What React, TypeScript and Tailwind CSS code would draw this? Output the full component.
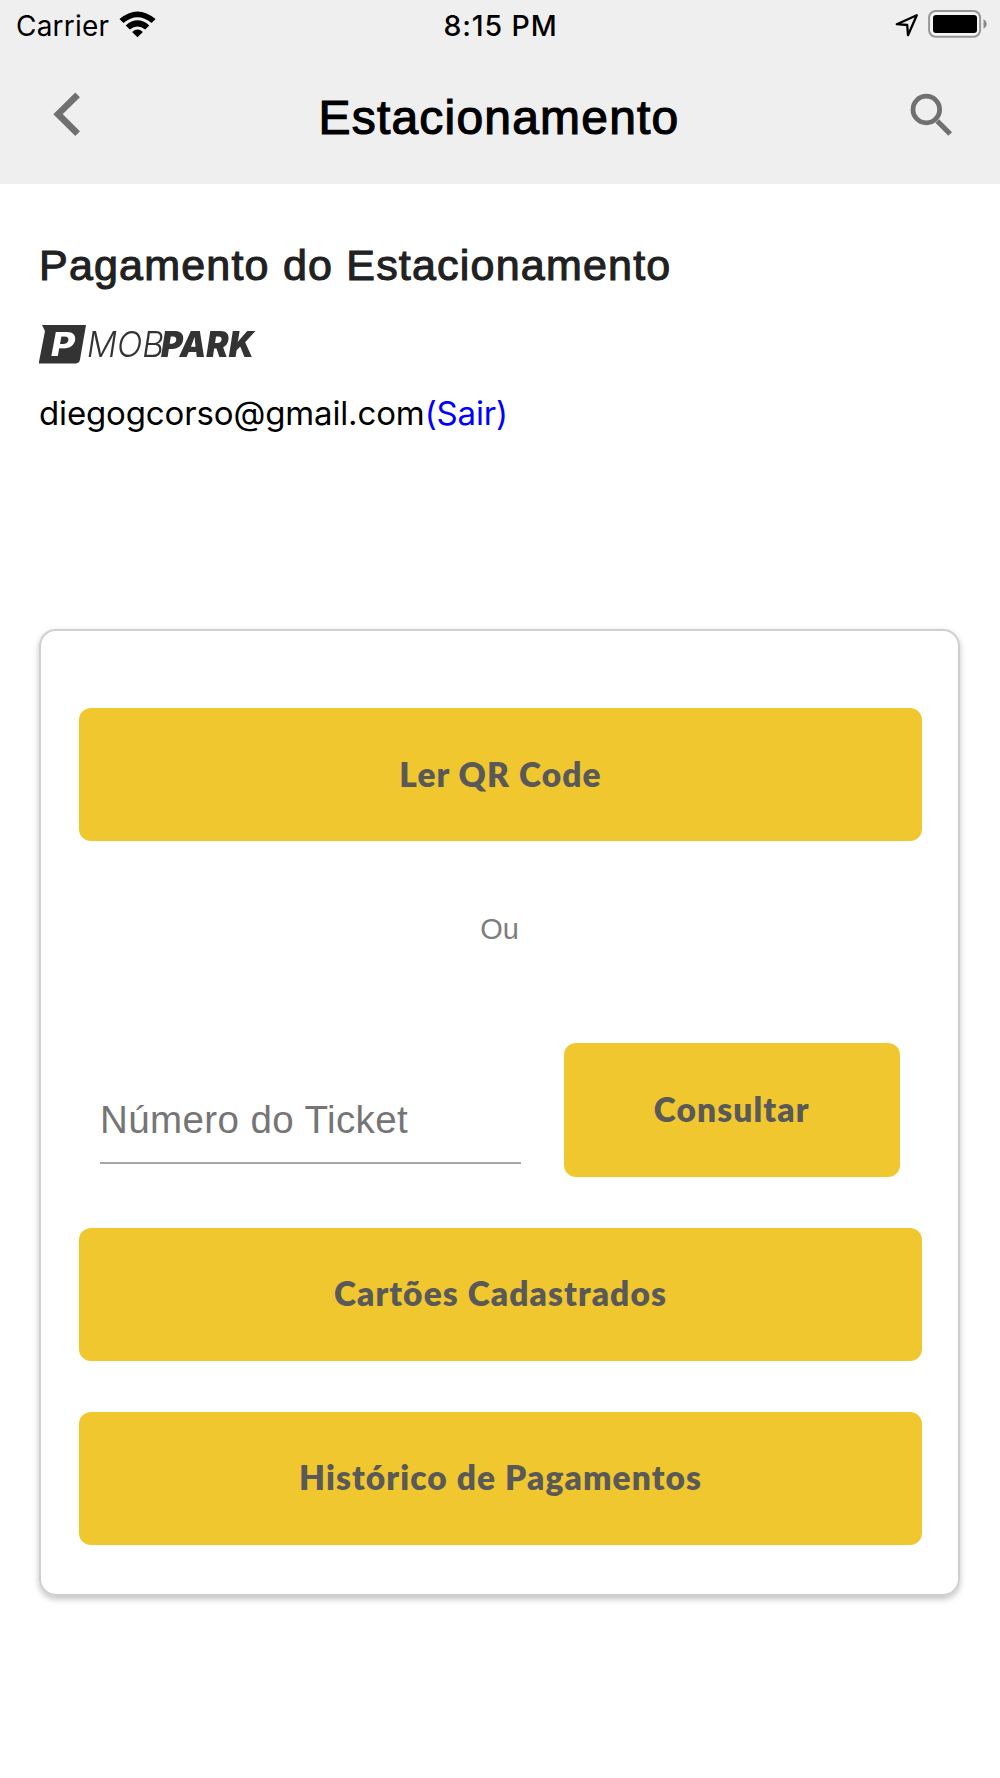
import type { ReactNode } from "react";

function StatusBar() {
  return (
    <div className="flex h-[50px] items-center justify-between pr-[13px] pl-4 font-['Inter',sans-serif] text-black">
      <div className="flex flex-1 items-center gap-[10px]">
        <span className="pt-[2px] text-[28px] leading-[48px] tracking-[0.2px]">Carrier</span>
        <svg width="37" height="27" viewBox="0 0 38 28" className="mb-[2px]">
          <path d="M0.3 8.4Q19 -7.4 37.7 8.4L33.6 12.4Q19 0.6 4.4 12.4Z" />
          <path d="M6.8 15Q19 4.4 31.2 15L27 19.1Q19 12.8 11 19.1Z" />
          <path d="M13.4 21.7Q19 16.8 24.6 21.7L19 27.2Z" />
        </svg>
      </div>
      <span className="pt-[2px] pr-[2px] text-[28.5px] leading-[48px] font-medium tracking-[0.9px]">8:15 PM</span>
      <div className="flex flex-1 items-center justify-end gap-[9px]">
        <svg width="24" height="24" viewBox="0 0 24 24" fill="none" stroke="#000" strokeWidth="2.3" strokeLinejoin="round">
          <path d="M21.8 2.2L1.8 11.2L12.2 12L13 22.2Z" />
        </svg>
        <svg width="59" height="28" viewBox="0 0 59 28" className="mb-[2px]">
          <rect x="1.1" y="1.1" width="51" height="25.6" rx="6.5" fill="#f4f4f4" stroke="#969696" strokeWidth="2" />
          <rect x="5" y="5" width="44" height="18" rx="3" />
          <path d="M55.5 9.2Q58.7 11 58.7 14T55.5 18.8Z" fill="#888" />
        </svg>
      </div>
    </div>
  );
}

function NavBar() {
  return (
    <div className="flex h-[134px] items-center justify-between pr-[47px] pb-[6px] pl-[53px]">
      <button className="w-[45px]" aria-label="Voltar">
        <svg width="28" height="44" viewBox="0 0 28 44" fill="none" stroke="#707070" strokeWidth="6.6">
          <path d="M24.6 2.8L5 22.2L24.6 41.6" />
        </svg>
      </button>
      <h1 className="pt-[8px] text-[48px] leading-none tracking-[1.2px] text-black [-webkit-text-stroke:1.2px_#000]">
        Estacionamento
      </h1>
      <button className="flex w-[53px] justify-end" aria-label="Buscar">
        <svg width="45" height="44" viewBox="0 0 45 44" fill="none" stroke="#707070">
          <circle cx="18.3" cy="17.5" r="13.3" strokeWidth="4.8" />
          <path d="M29.2 29L42.2 42" strokeWidth="5.2" />
        </svg>
      </button>
    </div>
  );
}

function Logo() {
  return (
    <svg width="230" height="56" viewBox="0 -8 230 56" fill="#333" className="blur-[0.5px]">
      <path d="M3 0H47L41 34.5Q40.3 38.6 36 38.6H0V36.8L6 6Z" />
      <g className="font-['Inter',sans-serif] italic">
        <text x="12" y="31" textLength="24" lengthAdjust="spacingAndGlyphs" fill="#fff" className="text-[32px] font-extrabold">P</text>
        <text x="48" y="32" textLength="77" lengthAdjust="spacingAndGlyphs" className="text-[35px] font-light">MOB</text>
        <text x="122" y="32" textLength="93" lengthAdjust="spacingAndGlyphs" className="text-[35px] font-black">PARK</text>
      </g>
    </svg>
  );
}

function ActionButton({ children, className = "w-full" }: { children: ReactNode; className?: string }) {
  return (
    <button
      className={`h-[133.3px] shrink-0 rounded-[12px] bg-[#f0c72f] pb-[2px] font-['Lato',sans-serif] text-[33.5px] font-extrabold tracking-[1.1px] text-[#595959] ${className}`}
    >
      {children}
    </button>
  );
}

export default function App() {
  return (
    <div className="min-h-[1778px] w-[1000px] bg-white font-['Liberation_Sans',Arial,sans-serif]">
      <header className="h-[184px] bg-[#efefef]">
        <StatusBar />
        <NavBar />
      </header>

      <main className="px-[39px]">
        <h2 className="pt-[56px] text-[43px] leading-[50px] tracking-[1.2px] text-[#212121] [-webkit-text-stroke:1.1px_#212121]">
          Pagamento do Estacionamento
        </h2>
        <div className="mt-[27px] h-12">
          <Logo />
        </div>
        <p className="mt-[27px] font-['Inter',sans-serif] text-[33px] leading-[42px] tracking-[-0.14px] text-black">
          diegogcorso@gmail.com<span className="text-[#0000ff]">(Sair)</span>
        </p>

        <section className="mt-[195px] h-[967px] w-[921px] rounded-[17px] border-2 border-[#cfcfcf] pt-[77px] pr-[36px] pl-[38px] shadow-[0_3px_6px_rgba(0,0,0,0.24)]">
          <ActionButton>Ler QR Code</ActionButton>
          <p className="mt-[68px] pr-[2px] text-center text-[29px] leading-[40px] text-[#7d7d7d]">Ou</p>
          <div className="mt-[94px] flex justify-between pr-[22px] pl-[21px]">
            <input
              type="text"
              placeholder="Número do Ticket"
              className="mt-[43px] h-[78px] w-[421px] border-b-2 border-[#a6a6a6] pb-[9px] text-[38.5px] tracking-[0.4px] outline-none placeholder:text-[#757575]"
            />
            <ActionButton className="w-[336.5px]">Consultar</ActionButton>
          </div>
          <div className="mt-[51px] flex flex-col gap-[51px]">
            <ActionButton>Cartões Cadastrados</ActionButton>
            <ActionButton>Histórico de Pagamentos</ActionButton>
          </div>
        </section>
      </main>
    </div>
  );
}
